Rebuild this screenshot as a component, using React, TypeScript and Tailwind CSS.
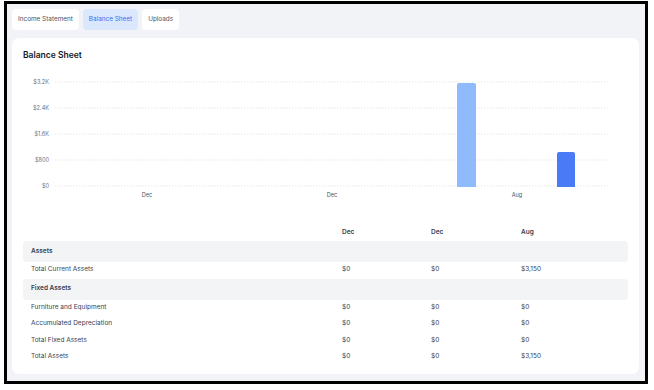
import React from "react";

const rows: { label: string; vals?: string[]; section?: boolean }[] = [
  { label: "Assets", section: true },
  { label: "Total Current Assets", vals: ["$0", "$0", "$3,150"] },
  { label: "Fixed Assets", section: true },
  { label: "Furniture and Equipment", vals: ["$0", "$0", "$0"] },
  { label: "Accumulated Depreciation", vals: ["$0", "$0", "$0"] },
  { label: "Total Fixed Assets", vals: ["$0", "$0", "$0"] },
  { label: "Total Assets", vals: ["$0", "$0", "$3,150"] },
];

function Chart() {
  const ticks = [
    { y: 15, l: "$3.2K" },
    { y: 41, l: "$2.4K" },
    { y: 67, l: "$1.6K" },
    { y: 93, l: "$800" },
    { y: 119, l: "$0" },
  ];
  const cats = [
    { x: 124, l: "Dec" },
    { x: 309, l: "Dec" },
    { x: 494, l: "Aug" },
  ];
  return (
    <svg width={605} height={140} className="block mt-[6px]" style={{ fontFamily: "Inter, sans-serif" }}>
      {ticks.map((t) => (
        <g key={t.l}>
          <line x1={32} x2={586} y1={t.y} y2={t.y} stroke="#e5e7eb" strokeWidth={1} strokeDasharray="1.5 1.5" />
          <text x={26} y={t.y + 0.5} textAnchor="end" dominantBaseline="middle" fontSize={5.6} fill="#6b7280">
            {t.l}
          </text>
        </g>
      ))}
      <path d="M434 18 a2 2 0 0 1 2 -2 h15 a2 2 0 0 1 2 2 V120 H434 Z" fill="#8fbbfd" />
      <path d="M534 87 a2 2 0 0 1 2 -2 h14 a2 2 0 0 1 2 2 V120 H534 Z" fill="#4a7af5" />
      {cats.map((c, i) => (
        <text key={i} x={c.x} y={128} textAnchor="middle" dominantBaseline="middle" fontSize={5.6} fill="#4b5563">
          {c.l}
        </text>
      ))}
    </svg>
  );
}

export default function App() {
  return (
    <div className="w-[654px] h-[390px] bg-white" style={{ fontFamily: "Inter, 'Noto Sans', sans-serif" }}>
      <div className="ml-[4px] pt-[1px]">
        <div className="w-[644px] h-[383px] border-[3px] border-black bg-[#f2f3f7] flex flex-col pl-[5px] pr-[6px] pt-[5px] pb-[7px]">
          <div className="flex gap-[4px] h-[21px]">
            <div className="h-full px-[6px] flex items-center bg-white rounded-[4px] text-[6.4px] text-[#4b5563]">
              Income Statement
            </div>
            <div className="h-full px-[6px] flex items-center bg-[#dbe7fd] rounded-[4px] text-[6.4px] text-[#3b6ff0]">
              Balance Sheet
            </div>
            <div className="h-full px-[6px] flex items-center bg-white rounded-[4px] text-[6.4px] text-[#4b5563]">
              Uploads
            </div>
          </div>
          <div className="mt-[8px] flex-1 bg-white rounded-[7px] px-[11px] pt-[11px]">
            <div className="text-[8.5px] leading-[12px] font-semibold text-[#111827]">Balance Sheet</div>
            <Chart />
            <div className="mt-[18px] text-[6.5px] text-[#374151]">
              <div className="grid grid-cols-[311px_89px_90px_1fr] h-[16px] items-center font-semibold">
                <div />
                <div className="pl-[8px]">Dec</div>
                <div className="pl-[8px]">Dec</div>
                <div className="pl-[8px]">Aug</div>
              </div>
              {rows.map((r, i) =>
                r.section ? (
                  <div key={i} className="h-[21px] flex items-center bg-[#f3f4f6] rounded-[4px] pl-[8px] font-semibold">
                    {r.label}
                  </div>
                ) : (
                  <div key={i} className="grid grid-cols-[311px_89px_90px_1fr] h-[16.5px] items-center">
                    <div className="pl-[8px]">{r.label}</div>
                    {r.vals!.map((v, j) => (
                      <div key={j} className="pl-[8px]">
                        {v}
                      </div>
                    ))}
                  </div>
                )
              )}
            </div>
          </div>
        </div>
      </div>
    </div>
  );
}
